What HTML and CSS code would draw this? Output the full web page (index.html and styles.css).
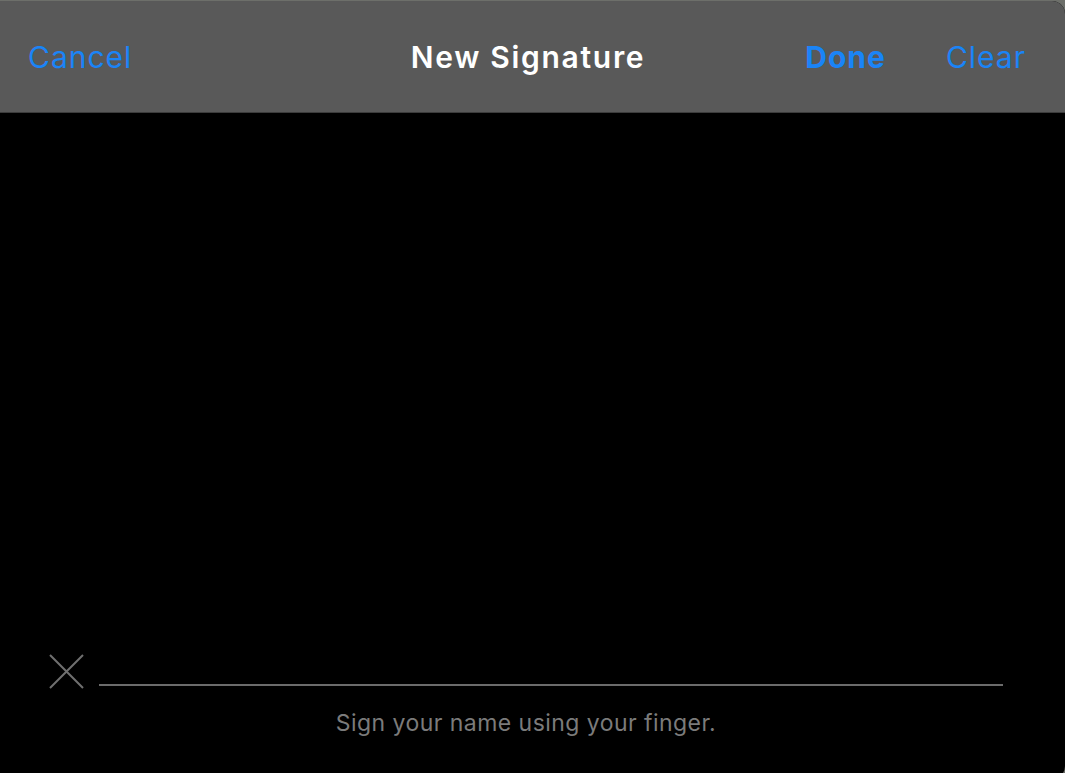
FILE: index.html
```html
<!DOCTYPE html>
<html lang="en">
<head>
<meta charset="utf-8">
<title>New Signature</title>
<link rel="stylesheet" href="styles.css">
</head>
<body>
<div class="sheet">
  <header class="navbar">
    <span class="btn cancel">Cancel</span>
    <span class="title">New Signature</span>
    <div class="right">
      <span class="btn done">Done</span>
      <span class="btn clear">Clear</span>
    </div>
  </header>
  <main class="pad">
    <div class="sign-row">
      <svg class="xmark" width="35" height="35" viewBox="0 0 35 35">
        <path d="M1 1 L34 34 M34 1 L1 34" stroke="#6f6f6f" stroke-width="2" fill="none"/>
      </svg>
      <div class="line"></div>
    </div>
    <p class="hint">Sign your name using your finger.</p>
  </main>
</div>
</body>
</html>
```
FILE: styles.css
```css
html, body {
  margin: 0;
  padding: 0;
  height: 100%;
  overflow: hidden;
}
body {
  background: #6d6f6a;
  font-family: Inter, "Liberation Sans", sans-serif;
  padding-top: 1px;
  box-sizing: border-box;
}
.sheet {
  height: 778px;
  background: #000;
  border-top-right-radius: 13px;
  border-bottom-right-radius: 13px;
  overflow: hidden;
  display: flex;
  flex-direction: column;
}
.navbar {
  height: 111px;
  background: #595959;
  border-bottom: 1px solid #3c3c3c;
  display: flex;
  align-items: center;
  position: relative;
  padding: 0 39px 0 28px;
}
.btn {
  color: #1a84f7;
  font-size: 30px;
  letter-spacing: 1px;
}
.title {
  position: absolute;
  left: 0;
  right: 0;
  text-align: center;
  color: #fff;
  font-size: 30px;
  font-weight: 600;
  letter-spacing: 1.7px;
  pointer-events: none;
  padding-right: 9px;
}
.right {
  margin-left: auto;
  display: flex;
  gap: 60px;
}
.done {
  font-weight: 700;
}
.pad {
  flex: 1;
  display: flex;
  flex-direction: column;
  justify-content: flex-end;
  padding: 0 62px 42px 49px;
}
.sign-row {
  display: flex;
  align-items: flex-end;
  gap: 15px;
}
.xmark {
  display: block;
  flex: none;
  margin-bottom: -2px;
}
.line {
  flex: 1;
  height: 2px;
  background: #6b6b6b;
  margin-bottom: 1px;
}
.hint {
  margin: 22px 0 0;
  text-align: center;
  color: #7b7b7b;
  font-size: 23px;
  letter-spacing: 0.45px;
}
```
